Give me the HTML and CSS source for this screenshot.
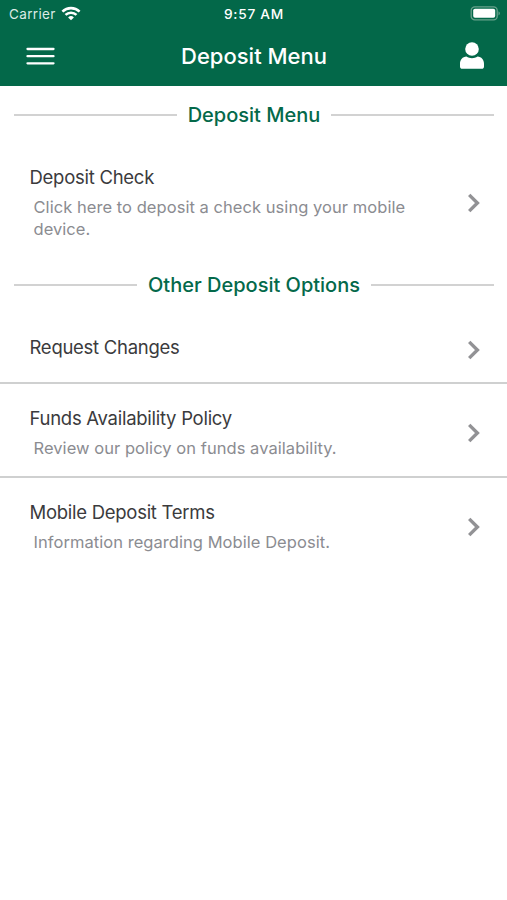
FILE: index.html
```
<!DOCTYPE html>
<html lang="en">
<head>
<meta charset="utf-8">
<title>Deposit Menu</title>
<link rel="stylesheet" href="styles.css">
</head>
<body>
<header class="header">
  <div class="status">
    <div class="carrier"><span class="carrier-name">Carrier</span>
      <svg class="wifi" width="20" height="15" viewBox="0 0 20 15" fill="none" stroke="#fff" stroke-width="2.6"><path d="M1.4 5.6a12.4 12.4 0 0 1 17.2 0M4.5 8.9a8 8 0 0 1 11 0"/><path d="M10 14.2 7.1 11.4a4.2 4.2 0 0 1 5.8 0Z" fill="#fff" stroke="none"/></svg>
    </div>
    <span class="time">9:57 AM</span>
    <svg class="battery" width="32" height="15" viewBox="0 0 32 15"><rect x="1.2" y=".8" width="26" height="13" rx="3.6" fill="none" stroke="#68a18c" stroke-width="1.3"/><rect x="3.2" y="2.8" width="22" height="9" rx="1.8" fill="#fff"/><path d="M28.5 5.2q2.8 2.1 0 4.2Z" fill="#68a18c"/></svg>
  </div>
  <div class="navbar">
    <svg class="menu" width="30" height="20" viewBox="0 0 30 20" stroke="#fff" stroke-width="2.3" stroke-linecap="round"><path d="M2.5 3h26M2.5 10.2h26M2.5 17.3h26"/></svg>
    <h1 class="title">Deposit Menu</h1>
    <svg class="user" width="24" height="28" viewBox="0 0 24 28" fill="#fff"><circle cx="12" cy="7" r="6.8"/><path d="M6.4 14.6c1.8 1.1 3.6 1.6 5.6 1.6s3.8-.5 5.6-1.6c3.8.2 6.4 3.4 6.4 7.2v2.7c0 1.4-.9 2.3-2.3 2.3H2.3C.9 26.8 0 25.9 0 24.5v-2.7c0-3.8 2.6-7 6.4-7.2Z"/></svg>
  </div>
</header>
<main>
  <h2 class="section first">Deposit Menu</h2>
  <a class="row plain">
    <div class="copy"><div class="name">Deposit Check</div><p class="desc">Click here to deposit a check using your mobile device.</p></div>
    <svg class="chevron" width="14" height="20" viewBox="0 0 14 20"><path d="m2.2 1.9 8.2 8.1-8.2 8.1"/></svg>
  </a>
  <h2 class="section">Other Deposit Options</h2>
  <a class="row">
    <div class="copy"><div class="name">Request Changes</div></div>
    <svg class="chevron" width="14" height="20" viewBox="0 0 14 20"><path d="m2.2 1.9 8.2 8.1-8.2 8.1"/></svg>
  </a>
  <a class="row">
    <div class="copy"><div class="name">Funds Availability Policy</div><p class="desc">Review our policy on funds availability.</p></div>
    <svg class="chevron" width="14" height="20" viewBox="0 0 14 20"><path d="m2.2 1.9 8.2 8.1-8.2 8.1"/></svg>
  </a>
  <a class="row plain">
    <div class="copy"><div class="name">Mobile Deposit Terms</div><p class="desc">Information regarding Mobile Deposit.</p></div>
    <svg class="chevron" width="14" height="20" viewBox="0 0 14 20"><path d="m2.2 1.9 8.2 8.1-8.2 8.1"/></svg>
  </a>
</main>
</body>
</html>
```
FILE: styles.css
```
* { box-sizing: border-box; }
body {
  margin: 0;
  min-height: 900px;
  background: #fff;
  font-family: Inter, "Liberation Sans", sans-serif;
}
h1, h2, p { margin: 0; }
svg { display: block; flex: none; }
.header { height: 86px; background: #036849; color: #fff; }
.status {
  display: grid;
  grid-template-columns: 1fr auto 1fr;
  align-items: center;
  height: 27px;
  padding: 0 5px 0 9px;
}
.carrier { display: flex; align-items: center; gap: 5px; color: #dcebe5; font-size: 13.5px; letter-spacing: 0.35px; }
.time { margin-left: -3px; font-size: 13.7px; font-weight: 500; letter-spacing: 0.75px; }
.battery { justify-self: end; }
.navbar {
  display: grid;
  grid-template-columns: 1fr auto 1fr;
  align-items: center;
  height: 58px;
  padding: 0 23px 0 25px;
}
.title { margin-left: -1px; font-size: 22px; font-weight: 500; line-height: 28px; }
.user { justify-self: end; }
.section {
  display: flex;
  align-items: center;
  gap: 11px;
  height: 55px;
  padding: 16px 13px 15px 14px;
  color: #04694a;
  font-size: 20px;
  font-weight: 500;
  line-height: 24px;
  white-space: nowrap;
}
.section.first { height: 56px; padding-top: 17px; }
.section::before, .section::after { content: ""; flex: 1; height: 2px; background: #d2d2d2; }
.row {
  display: flex;
  align-items: center;
  padding: 23px 26.5px 17px 29.5px;
  border-bottom: 2px solid #cfd0d0;
  color: #3b3b3d;
}
.row.plain { border-bottom: 0; }
.row + .row { padding-top: 22px; padding-bottom: 17px; }
.copy { flex: 1; padding-right: 40px; }
.name { font-size: 18.5px; line-height: 24px; letter-spacing: -0.27px; }
.name:only-child { padding-bottom: 6px; }
.desc { margin-top: 7px; padding-left: 4px; color: #8b8c91; font-size: 16.5px; line-height: 22px; letter-spacing: 0.05px; }
.chevron { fill: none; stroke: #929295; stroke-width: 3.4; }
```
